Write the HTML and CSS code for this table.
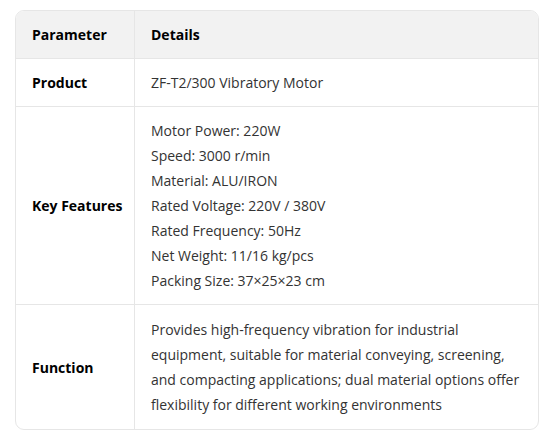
FILE: index.html
```html
<!DOCTYPE html>
<html>
<head>
<meta charset="utf-8">
<link rel="stylesheet" href="styles.css">
</head>
<body>
<div class="wrap">
<table class="spec">
  <thead>
    <tr><th class="c1">Parameter</th><th>Details</th></tr>
  </thead>
  <tbody>
    <tr><td class="c1">Product</td><td>ZF-T2/300 Vibratory Motor</td></tr>
    <tr><td class="c1">Key Features</td><td>Motor Power: 220W<br>Speed: 3000 r/min<br>Material: ALU/IRON<br>Rated Voltage: 220V / 380V<br>Rated Frequency: 50Hz<br>Net Weight: 11/16 kg/pcs<br>Packing Size: 37×25×23 cm</td></tr>
    <tr class="last"><td class="c1">Function</td><td>Provides high-frequency vibration for industrial equipment, suitable for material conveying, screening, and compacting applications; dual material options offer flexibility for different working environments</td></tr>
  </tbody>
</table>
</div>
</body>
</html>
```
FILE: styles.css
```css
html, body { margin: 0; padding: 0; background: #fff; }
.wrap { padding: 10px 7px 0 15px; }
.spec {
  width: 524px;
  table-layout: fixed;
  border-collapse: separate;
  border-spacing: 0;
  border: 1px solid #e6e6e6;
  border-radius: 9px;
  overflow: hidden;
  font-family: "Open Sans", "Noto Sans", sans-serif;
  font-size: 14px;
  line-height: 25px;
  color: #333;
}
.spec th, .spec td {
  padding: 11px 16px;
  text-align: left;
  vertical-align: middle;
  border-bottom: 1px solid #e6e6e6;
}
.spec .last td { border-bottom: none; padding-top: 12px; padding-bottom: 12px; }
.spec thead th { background: #f2f2f2; font-weight: 700; color: #000; }
.spec .c1 { width: 86px; white-space: nowrap; border-right: 1px solid #e6e6e6; font-weight: 700; color: #000; }
```
